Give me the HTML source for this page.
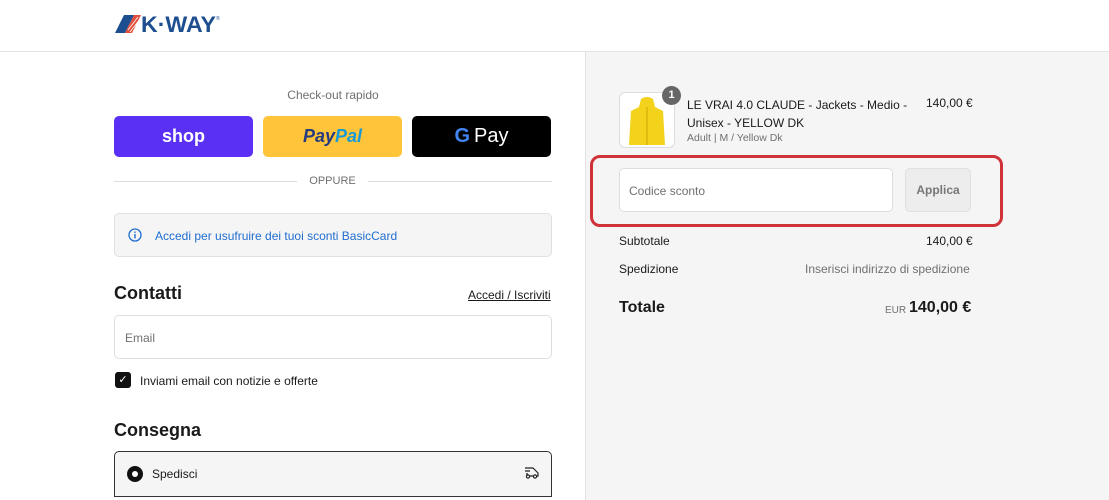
<!DOCTYPE html>
<html><head><meta charset="utf-8"><style>
*{box-sizing:border-box;margin:0;padding:0}
body{width:1109px;height:500px;overflow:hidden;font-family:"Liberation Sans","DejaVu Sans",sans-serif;background:#fff;color:#1a1a1a;position:relative}
.hdr{position:absolute;left:0;top:0;width:1109px;height:52px;border-bottom:1px solid #e3e3e3;background:#fff}
.right{position:absolute;left:585px;top:52px;width:524px;height:448px;background:#f5f5f5;border-left:1px solid #e3e3e3}
.a{position:absolute}
.btn{position:absolute;top:116px;width:139px;height:41px;border-radius:5px;display:flex;align-items:center;justify-content:center}
.muted{color:#707070}
</style></head><body>
<div class="hdr">
 <svg class="a" style="left:114px;top:14px" width="106" height="20" viewBox="0 0 106 20">
  <polygon points="1,19 10,1 20,1 11,19" fill="#1d4e8f"/>
  <polygon points="11,19 20,1 27,1 18,19" fill="#e0503c"/>
  <path d="M14 16 L24 3 M16 18 L26 5" stroke="#fff" stroke-width="0.8"/>
  <text x="27" y="18" font-family="Liberation Sans" font-weight="bold" font-size="22" fill="#1d4e8f" textLength="75" lengthAdjust="spacingAndGlyphs">K·WAY</text>
  <text x="102" y="6" font-size="5" fill="#1d4e8f">®</text>
 </svg>
</div>

<div class="a muted" style="left:114px;top:88px;width:438px;text-align:center;font-size:12px">Check-out rapido</div>
<div class="btn" style="left:114px;background:#5a31f4;color:#fff;font-weight:bold;font-size:18px">shop</div>
<div class="btn" style="left:263px;background:#ffc439;font-weight:bold;font-style:italic;font-size:18px"><span style="color:#253b80">Pay</span><span style="color:#179bd7">Pal</span></div>
<div class="btn" style="left:412px;background:#000;color:#fff;font-size:20px"><span style="font-weight:bold;color:#4285f4;margin-right:4px">G</span>Pay</div>
<div class="a" style="left:114px;top:181px;width:183px;border-top:1px solid #dcdcdc"></div>
<div class="a" style="left:368px;top:181px;width:184px;border-top:1px solid #dcdcdc"></div>
<div class="a muted" style="left:297px;top:175px;width:71px;text-align:center;font-size:11px">OPPURE</div>

<div class="a" style="left:114px;top:213px;width:438px;height:44px;background:#f5f5f5;border:1px solid #e0e0e0;border-radius:5px"></div>
<svg class="a" style="left:128px;top:228px" width="14" height="14" viewBox="0 0 14 14"><circle cx="7" cy="7" r="6" fill="none" stroke="#1f6dd0" stroke-width="1.3"/><rect x="6.3" y="6" width="1.4" height="4.5" fill="#1f6dd0"/><rect x="6.3" y="3.5" width="1.4" height="1.4" fill="#1f6dd0"/></svg>
<div class="a" style="left:155px;top:229px;font-size:12px;color:#1f6dd0">Accedi per usufruire dei tuoi sconti BasicCard</div>

<div class="a" style="left:114px;top:283px;font-size:18px;font-weight:bold">Contatti</div>
<div class="a" style="left:468px;top:288px;font-size:12px;text-decoration:underline">Accedi / Iscriviti</div>
<div class="a" style="left:114px;top:315px;width:438px;height:44px;border:1px solid #dedede;border-radius:5px"></div>
<div class="a muted" style="left:125px;top:331px;font-size:12px">Email</div>
<div class="a" style="left:115px;top:372px;width:16px;height:16px;background:#111;border-radius:3px;color:#fff;font-size:11px;text-align:center;line-height:16px">✓</div>
<div class="a" style="left:140px;top:374px;font-size:12px">Inviami email con notizie e offerte</div>

<div class="a" style="left:114px;top:420px;font-size:18px;font-weight:bold">Consegna</div>
<div class="a" style="left:114px;top:451px;width:438px;height:46px;border:1px solid #333;border-radius:5px 5px 0 0;background:#f5f5f5"></div>
<div class="a" style="left:127px;top:466px;width:16px;height:16px;border-radius:50%;background:#111"><div style="margin:5px;width:6px;height:6px;border-radius:50%;background:#fff"></div></div>
<div class="a" style="left:152px;top:467px;font-size:12px">Spedisci</div>
<svg class="a" style="left:524px;top:466px" width="16" height="14" viewBox="0 0 16 14" fill="none" stroke="#222" stroke-width="1.2"><path d="M1 2 H9 L12 5 L14 7 V10 H12 M5 10 H10 M1 5 H6 M2 8 H4"/><circle cx="4" cy="10.5" r="1.6"/><circle cx="11" cy="10.5" r="1.6"/></svg>

<div class="right"></div>
<div class="a" style="left:619px;top:92px;width:56px;height:56px;border:1px solid #ddd;border-radius:6px;background:#fff"></div>
<svg class="a" style="left:627px;top:95px" width="40" height="52" viewBox="0 0 40 52"><path d="M14 4 Q20 0 26 4 L28 12 L36 16 L38 50 L2 50 L4 16 L12 12Z" fill="#f2d21b"/><line x1="20" y1="12" x2="20" y2="50" stroke="#c9a800"/></svg>
<div class="a" style="left:662px;top:86px;width:19px;height:19px;border-radius:50%;background:#666;color:#fff;font-size:11px;text-align:center;line-height:19px;font-weight:bold">1</div>
<div class="a" style="left:687px;top:96px;width:225px;font-size:12px;line-height:18px">LE VRAI 4.0 CLAUDE - Jackets - Medio - Unisex - YELLOW DK</div>
<div class="a muted" style="left:687px;top:132px;font-size:10.5px">Adult | M / Yellow Dk</div>
<div class="a" style="left:926px;top:96px;font-size:12px">140,00 €</div>

<div class="a" style="left:590px;top:155px;width:413px;height:72px;border:3px solid #d0323a;border-radius:10px"></div>
<div class="a" style="left:619px;top:168px;width:274px;height:44px;background:#fff;border:1px solid #dedede;border-radius:5px"></div>
<div class="a muted" style="left:629px;top:184px;font-size:12px">Codice sconto</div>
<div class="a" style="left:905px;top:168px;width:66px;height:44px;background:#ededed;border:1px solid #e0e0e0;border-radius:5px;color:#777;font-size:12px;font-weight:bold;text-align:center;line-height:42px">Applica</div>

<div class="a" style="left:619px;top:234px;font-size:12px">Subtotale</div>
<div class="a" style="left:926px;top:234px;font-size:12px">140,00 €</div>
<div class="a" style="left:619px;top:262px;font-size:12px">Spedizione</div>
<div class="a muted" style="left:805px;top:262px;font-size:12px">Inserisci indirizzo di spedizione</div>
<div class="a" style="left:619px;top:299px;font-size:16px;font-weight:bold">Totale</div>
<div class="a muted" style="left:885px;top:305px;font-size:10px">EUR</div>
<div class="a" style="left:909px;top:299px;font-size:16px;font-weight:bold">140,00 €</div>
</body></html>
